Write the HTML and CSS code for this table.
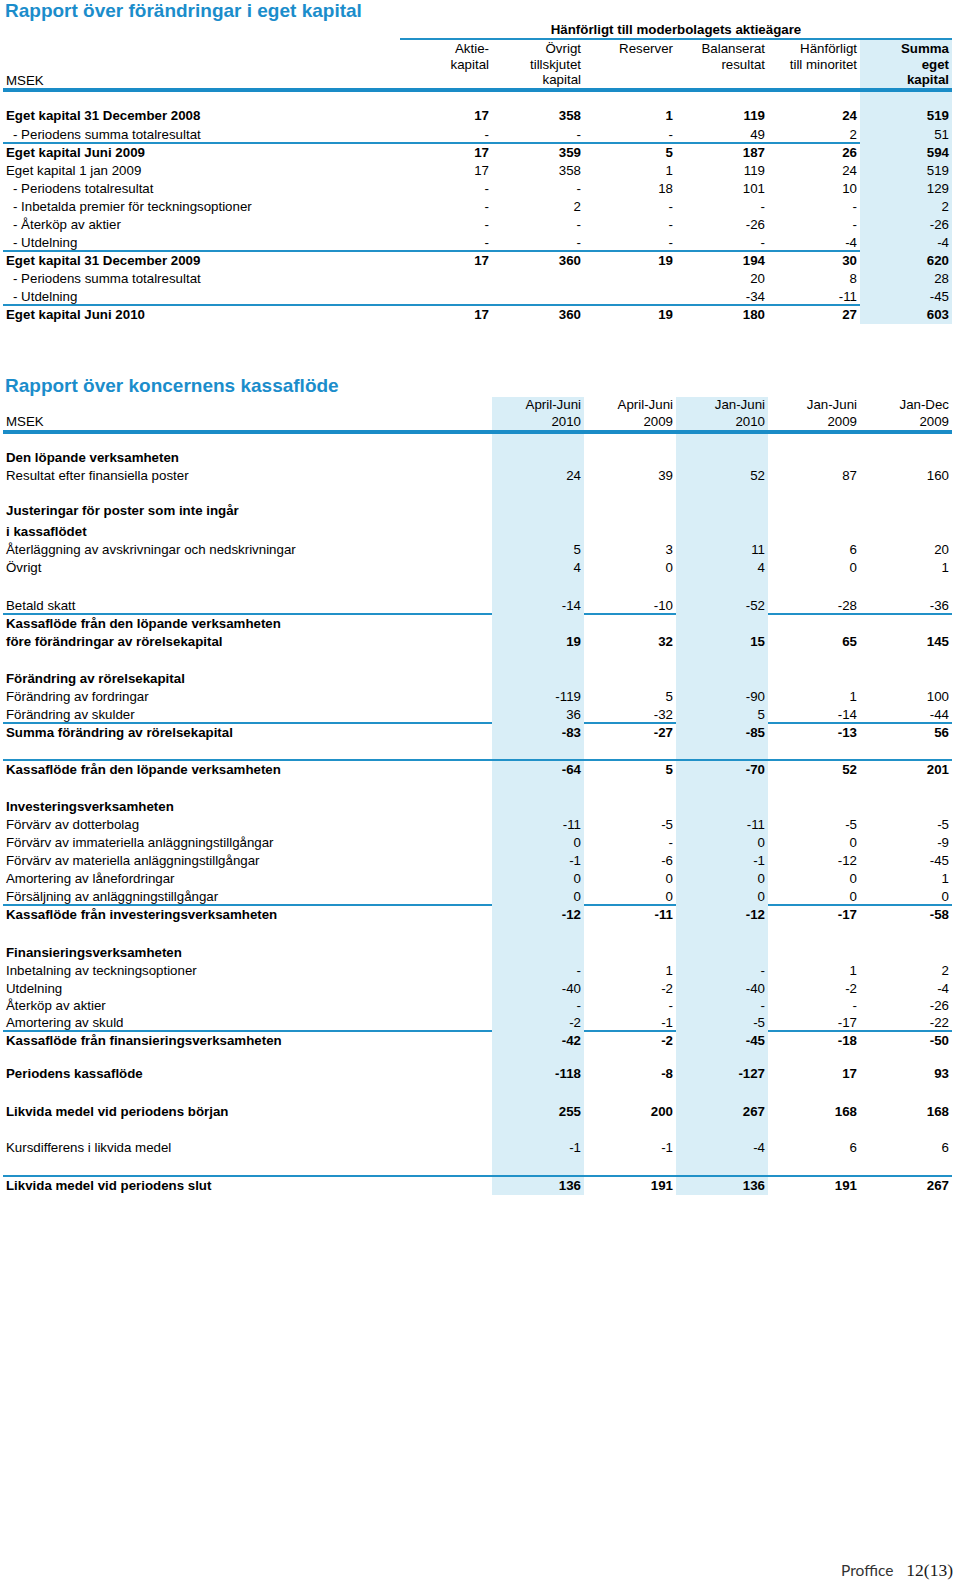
FILE: index.html
```html
<!DOCTYPE html>
<html lang="sv">
<head>
<meta charset="utf-8">
<title>Rapport över förändringar i eget kapital</title>
<link rel="stylesheet" href="styles.css">
</head>
<body>
<div class="page">
  <div class="sheet">
    <section class="soe">
      <h1 class="title">Rapport över förändringar i eget kapital</h1>
      <div class="sup"><div></div><div class="sup-t">Hänförligt till moderbolagets aktieägare</div></div>
      <div class="row hdr">
        <div class="lab">MSEK</div>
        <div class="n">Aktie-<br>kapital</div>
        <div class="n">Övrigt<br>tillskjutet<br>kapital</div>
        <div class="n">Reserver</div>
        <div class="n">Balanserat<br>resultat</div>
        <div class="n">Hänförligt<br>till minoritet</div>
        <div class="n hl b">Summa<br>eget<br>kapital</div>
      </div>
      <div class="row g15"><div></div><div></div><div></div><div></div><div></div><div></div><div class="hl"></div></div>
      <div class="row b h19"><div class="lab">Eget kapital 31 December 2008</div><div class="n">17</div><div class="n">358</div><div class="n">1</div><div class="n">119</div><div class="n">24</div><div class="n hl">519</div></div>
      <div class="row line"><div class="lab ind">- Periodens summa totalresultat</div><div class="n">-</div><div class="n">-</div><div class="n">-</div><div class="n">49</div><div class="n">2</div><div class="n hl">51</div></div>
      <div class="row b"><div class="lab">Eget kapital Juni 2009</div><div class="n">17</div><div class="n">359</div><div class="n">5</div><div class="n">187</div><div class="n">26</div><div class="n hl">594</div></div>
      <div class="row"><div class="lab">Eget kapital 1 jan 2009</div><div class="n">17</div><div class="n">358</div><div class="n">1</div><div class="n">119</div><div class="n">24</div><div class="n hl">519</div></div>
      <div class="row"><div class="lab ind">- Periodens totalresultat</div><div class="n">-</div><div class="n">-</div><div class="n">18</div><div class="n">101</div><div class="n">10</div><div class="n hl">129</div></div>
      <div class="row"><div class="lab ind">- Inbetalda premier för teckningsoptioner</div><div class="n">-</div><div class="n">2</div><div class="n">-</div><div class="n">-</div><div class="n">-</div><div class="n hl">2</div></div>
      <div class="row"><div class="lab ind">- Återköp av aktier</div><div class="n">-</div><div class="n">-</div><div class="n">-</div><div class="n">-26</div><div class="n">-</div><div class="n hl">-26</div></div>
      <div class="row line"><div class="lab ind">- Utdelning</div><div class="n">-</div><div class="n">-</div><div class="n">-</div><div class="n">-</div><div class="n">-4</div><div class="n hl">-4</div></div>
      <div class="row b"><div class="lab">Eget kapital 31 December 2009</div><div class="n">17</div><div class="n">360</div><div class="n">19</div><div class="n">194</div><div class="n">30</div><div class="n hl">620</div></div>
      <div class="row"><div class="lab ind">- Periodens summa totalresultat</div><div class="n"></div><div class="n"></div><div class="n"></div><div class="n">20</div><div class="n">8</div><div class="n hl">28</div></div>
      <div class="row line"><div class="lab ind">- Utdelning</div><div class="n"></div><div class="n"></div><div class="n"></div><div class="n">-34</div><div class="n">-11</div><div class="n hl">-45</div></div>
      <div class="row b"><div class="lab">Eget kapital Juni 2010</div><div class="n">17</div><div class="n">360</div><div class="n">19</div><div class="n">180</div><div class="n">27</div><div class="n hl">603</div></div>
    </section>

    <section class="cf">
      <h1 class="title title-cf">Rapport över koncernens kassaflöde</h1>
      <div class="row hdr">
        <div class="lab">MSEK</div>
        <div class="n hl">April-Juni<br>2010</div>
        <div class="n">April-Juni<br>2009</div>
        <div class="n hl">Jan-Juni<br>2010</div>
        <div class="n">Jan-Juni<br>2009</div>
        <div class="n">Jan-Dec<br>2009</div>
      </div>
      <div class="row g15"><div></div><div class="hl"></div><div></div><div class="hl"></div><div></div><div></div></div>
      <div class="row b"><div class="lab">Den löpande verksamheten</div><div class="hl"></div><div></div><div class="hl"></div><div></div><div></div></div>
      <div class="row"><div class="lab">Resultat efter finansiella poster</div><div class="n hl">24</div><div class="n">39</div><div class="n hl">52</div><div class="n">87</div><div class="n">160</div></div>
      <div class="row g17"><div></div><div class="hl"></div><div></div><div class="hl"></div><div></div><div></div></div>
      <div class="row b"><div class="lab">Justeringar för poster som inte ingår</div><div class="hl"></div><div></div><div class="hl"></div><div></div><div></div></div>
      <div class="row g3"><div></div><div class="hl"></div><div></div><div class="hl"></div><div></div><div></div></div>
      <div class="row b"><div class="lab">i kassaflödet</div><div class="hl"></div><div></div><div class="hl"></div><div></div><div></div></div>
      <div class="row"><div class="lab">Återläggning av avskrivningar och nedskrivningar</div><div class="n hl">5</div><div class="n">3</div><div class="n hl">11</div><div class="n">6</div><div class="n">20</div></div>
      <div class="row"><div class="lab">Övrigt</div><div class="n hl">4</div><div class="n">0</div><div class="n hl">4</div><div class="n">0</div><div class="n">1</div></div>
      <div class="row g20"><div></div><div class="hl"></div><div></div><div class="hl"></div><div></div><div></div></div>
      <div class="row line"><div class="lab">Betald skatt</div><div class="n hl">-14</div><div class="n">-10</div><div class="n hl">-52</div><div class="n">-28</div><div class="n">-36</div></div>
      <div class="row b"><div class="lab">Kassaflöde från den löpande verksamheten</div><div class="hl"></div><div></div><div class="hl"></div><div></div><div></div></div>
      <div class="row b"><div class="lab">före förändringar av rörelsekapital</div><div class="n hl">19</div><div class="n">32</div><div class="n hl">15</div><div class="n">65</div><div class="n">145</div></div>
      <div class="row g19"><div></div><div class="hl"></div><div></div><div class="hl"></div><div></div><div></div></div>
      <div class="row b"><div class="lab">Förändring av rörelsekapital</div><div class="hl"></div><div></div><div class="hl"></div><div></div><div></div></div>
      <div class="row"><div class="lab">Förändring av fordringar</div><div class="n hl">-119</div><div class="n">5</div><div class="n hl">-90</div><div class="n">1</div><div class="n">100</div></div>
      <div class="row line"><div class="lab">Förändring av skulder</div><div class="n hl">36</div><div class="n">-32</div><div class="n hl">5</div><div class="n">-14</div><div class="n">-44</div></div>
      <div class="row b"><div class="lab">Summa förändring av rörelsekapital</div><div class="n hl">-83</div><div class="n">-27</div><div class="n hl">-85</div><div class="n">-13</div><div class="n">56</div></div>
      <div class="row g19 line"><div></div><div class="hl"></div><div></div><div class="hl"></div><div></div><div></div></div>
      <div class="row b"><div class="lab">Kassaflöde från den löpande verksamheten</div><div class="n hl">-64</div><div class="n">5</div><div class="n hl">-70</div><div class="n">52</div><div class="n">201</div></div>
      <div class="row g19"><div></div><div class="hl"></div><div></div><div class="hl"></div><div></div><div></div></div>
      <div class="row b"><div class="lab">Investeringsverksamheten</div><div class="hl"></div><div></div><div class="hl"></div><div></div><div></div></div>
      <div class="row"><div class="lab">Förvärv av dotterbolag</div><div class="n hl">-11</div><div class="n">-5</div><div class="n hl">-11</div><div class="n">-5</div><div class="n">-5</div></div>
      <div class="row"><div class="lab">Förvärv av immateriella anläggningstillgångar</div><div class="n hl">0</div><div class="n">-</div><div class="n hl">0</div><div class="n">0</div><div class="n">-9</div></div>
      <div class="row"><div class="lab">Förvärv av materiella anläggningstillgångar</div><div class="n hl">-1</div><div class="n">-6</div><div class="n hl">-1</div><div class="n">-12</div><div class="n">-45</div></div>
      <div class="row"><div class="lab">Amortering av lånefordringar</div><div class="n hl">0</div><div class="n">0</div><div class="n hl">0</div><div class="n">0</div><div class="n">1</div></div>
      <div class="row line"><div class="lab">Försäljning av anläggningstillgångar</div><div class="n hl">0</div><div class="n">0</div><div class="n hl">0</div><div class="n">0</div><div class="n">0</div></div>
      <div class="row b"><div class="lab">Kassaflöde från investeringsverksamheten</div><div class="n hl">-12</div><div class="n">-11</div><div class="n hl">-12</div><div class="n">-17</div><div class="n">-58</div></div>
      <div class="row g20"><div></div><div class="hl"></div><div></div><div class="hl"></div><div></div><div></div></div>
      <div class="row b"><div class="lab">Finansieringsverksamheten</div><div class="hl"></div><div></div><div class="hl"></div><div></div><div></div></div>
      <div class="row"><div class="lab">Inbetalning av teckningsoptioner</div><div class="n hl">-</div><div class="n">1</div><div class="n hl">-</div><div class="n">1</div><div class="n">2</div></div>
      <div class="row h17"><div class="lab">Utdelning</div><div class="n hl">-40</div><div class="n">-2</div><div class="n hl">-40</div><div class="n">-2</div><div class="n">-4</div></div>
      <div class="row h17"><div class="lab">Återköp av aktier</div><div class="n hl">-</div><div class="n">-</div><div class="n hl">-</div><div class="n">-</div><div class="n">-26</div></div>
      <div class="row line"><div class="lab">Amortering av skuld</div><div class="n hl">-2</div><div class="n">-1</div><div class="n hl">-5</div><div class="n">-17</div><div class="n">-22</div></div>
      <div class="row b"><div class="lab">Kassaflöde från finansieringsverksamheten</div><div class="n hl">-42</div><div class="n">-2</div><div class="n hl">-45</div><div class="n">-18</div><div class="n">-50</div></div>
      <div class="row g15"><div></div><div class="hl"></div><div></div><div class="hl"></div><div></div><div></div></div>
      <div class="row b"><div class="lab">Periodens kassaflöde</div><div class="n hl">-118</div><div class="n">-8</div><div class="n hl">-127</div><div class="n">17</div><div class="n">93</div></div>
      <div class="row g20"><div></div><div class="hl"></div><div></div><div class="hl"></div><div></div><div></div></div>
      <div class="row b"><div class="lab">Likvida medel vid periodens början</div><div class="n hl">255</div><div class="n">200</div><div class="n hl">267</div><div class="n">168</div><div class="n">168</div></div>
      <div class="row g18"><div></div><div class="hl"></div><div></div><div class="hl"></div><div></div><div></div></div>
      <div class="row"><div class="lab">Kursdifferens i likvida medel</div><div class="n hl">-1</div><div class="n">-1</div><div class="n hl">-4</div><div class="n">6</div><div class="n">6</div></div>
      <div class="row g20 line"><div></div><div class="hl"></div><div></div><div class="hl"></div><div></div><div></div></div>
      <div class="row b"><div class="lab">Likvida medel vid periodens slut</div><div class="n hl">136</div><div class="n">191</div><div class="n hl">136</div><div class="n">191</div><div class="n">267</div></div>
    </section>
  </div>

  <footer class="foot">
    <span class="brand">Proffice</span>
    <span class="pg">12(13)</span>
  </footer>
</div>
</body>
</html>
```

FILE: styles.css
```css
* {
  box-sizing: border-box;
}

html,
body {
  margin: 0;
  padding: 0;
  background: #ffffff;
}

body {
  font-family: "Liberation Sans", Arial, Helvetica, sans-serif;
  font-size: 13.3px;
  color: #000000;
}

.page {
  width: 960px;
  min-height: 1582px;
  display: flex;
  flex-direction: column;
  padding-left: 3px;
}

.sheet {
  width: 949px;
}

.title {
  margin: 0;
  padding-left: 2px;
  font-size: 19px;
  line-height: 22px;
  font-weight: bold;
  color: #1b8dcb;
}

.title-cf {
  margin-top: 51px;
}

.sup {
  display: grid;
  grid-template-columns: 397px 552px;
  line-height: 16px;
}

.sup-t {
  text-align: center;
  font-weight: bold;
  border-bottom: 2px solid #2191c8;
}

.row {
  display: grid;
  height: 18px;
  line-height: 18px;
}

.soe .row {
  grid-template-columns: 397px repeat(6, 92px);
}

.cf .row {
  grid-template-columns: 489px repeat(5, 92px);
}

.lab {
  padding-left: 3px;
  white-space: nowrap;
}

.ind {
  padding-left: 10px;
}

.n {
  text-align: right;
  padding-right: 3px;
  white-space: nowrap;
}

.b {
  font-weight: bold;
}

.hl {
  background: #d9eef7;
}

.line {
  border-bottom: 2px solid #2191c8;
}

.hdr {
  height: auto;
  border-bottom: 4px solid #1a8cc7;
}

.soe .hdr {
  line-height: 15.5px;
}

.soe .hdr .n {
  padding-top: 1px;
  padding-bottom: 0.5px;
}

.cf .hdr {
  line-height: 16.5px;
}

.hdr .lab {
  align-self: end;
}

.h19 {
  height: 19px;
}

.h17 {
  height: 17px;
}

.g3 { height: 3px; }
.g15 { height: 15px; }
.g17 { height: 17px; }
.g18 { height: 18px; }
.g19 { height: 19px; }
.g20 { height: 20px; }

.foot {
  margin-top: auto;
  display: flex;
  justify-content: flex-end;
  align-items: baseline;
  gap: 13px;
  height: 22px;
  padding-right: 7px;
  padding-bottom: 2px;
}

.brand {
  font-family: Lato, "Open Sans", "DejaVu Sans", sans-serif;
  font-weight: 400;
  font-size: 15.5px;
  color: #333333;
}

.pg {
  font-family: "Liberation Serif", "Times New Roman", serif;
  font-size: 17.5px;
  color: #1a1a1a;
}
```
